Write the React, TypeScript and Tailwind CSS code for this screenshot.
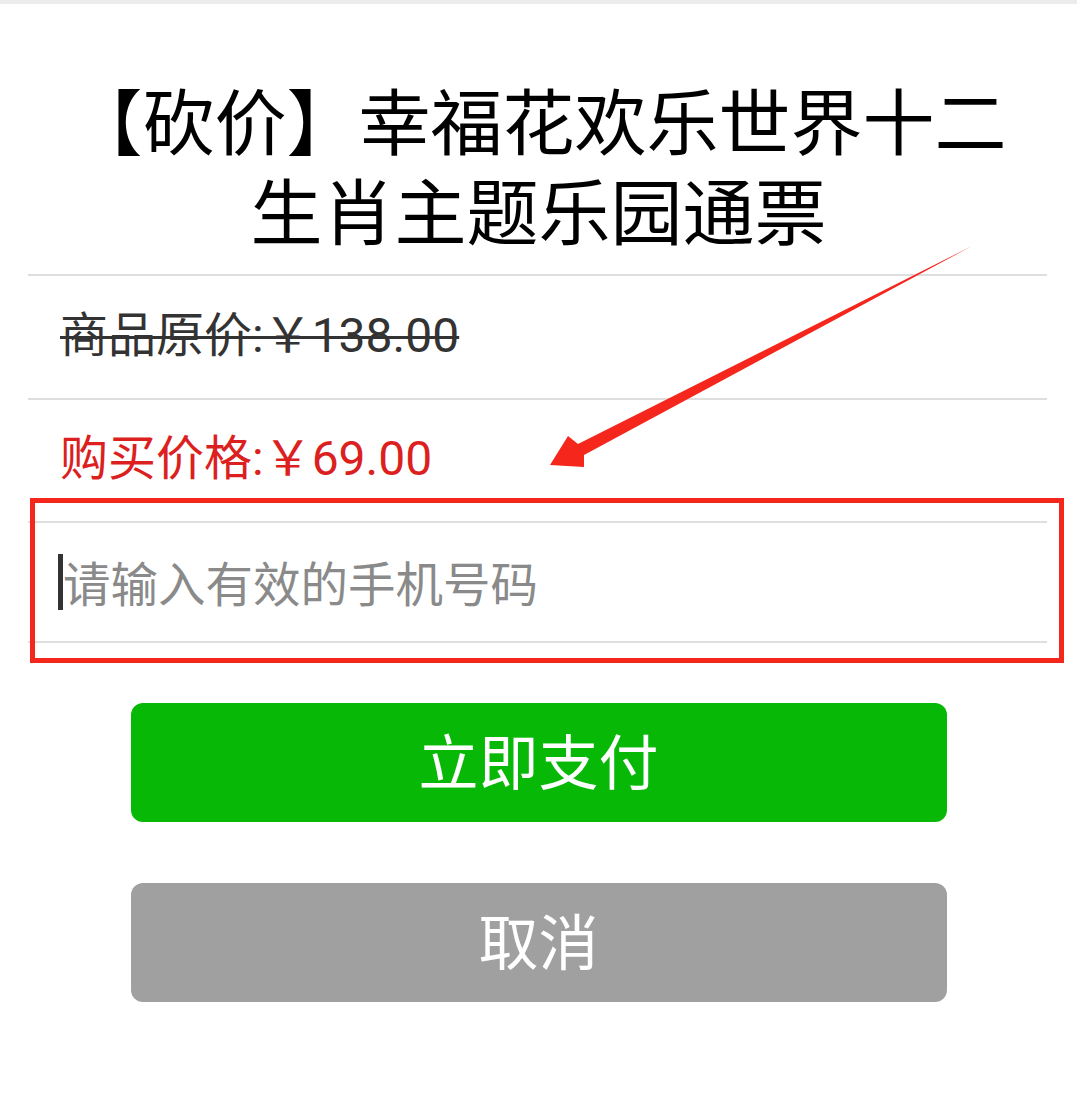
import React from 'react';

const cjk = "font-['Noto_Sans_CJK_SC',sans-serif]";
const mixed = "font-['Roboto','Noto_Sans_CJK_SC',sans-serif]";

const Arrow: React.FC = () => (
  <svg className="pointer-events-none absolute left-0 top-0" width="1077" height="1096" viewBox="0 0 1077 1096">
    <polygon points="550,465 568,436 578,444 972,246 584,455 584,467" fill="#f5261c" />
  </svg>
);

const App: React.FC = () => {
  return (
    <div className={`relative w-[1077px] min-h-[1096px] bg-white ${cjk}`}>
      <div className="h-[4px] bg-[#ececec]" />

      <h1 className="px-[40px] pt-[69px] pb-[21px] text-center text-[72px] leading-[90px] font-normal text-black">
        【砍价】幸福花欢乐世界十二生肖主题乐园通票
      </h1>

      <div className="mx-[28px] mr-[30px]">
        <div className="h-[2px] bg-[#dedede]" />
        <div className="flex h-[122px] items-center pl-[32px] pb-[2px]">
          <span className={`${mixed} text-[48px] text-[#333] line-through decoration-[3px]`}>商品原价:￥138.00</span>
        </div>
        <div className="h-[2px] bg-[#dedede]" />
        <div className="flex h-[121px] items-center pl-[32px] pb-[3px]">
          <span className={`${mixed} text-[48px] text-[#dc1f1f]`}>购买价格:￥69.00</span>
        </div>
        <div className="h-[2px] bg-[#dedede]" />
        <div className="flex h-[118px] items-center pl-[30px]">
          <span className="h-[56px] w-[5px] bg-[#333]" />
          <input
            className={`${cjk} w-full bg-transparent text-[47.5px] outline-none placeholder:text-[#8a8a8a]`}
            placeholder="请输入有效的手机号码"
          />
        </div>
        <div className="h-[2px] bg-[#dedede]" />
      </div>

      <div className="mt-[60px] flex flex-col items-center gap-[61px]">
        <button className="flex h-[119px] w-[816px] items-center justify-center rounded-[12px] bg-[#07b807] pb-[8px] text-[60px] text-white">
          立即支付
        </button>
        <button className="flex h-[119px] w-[816px] items-center justify-center rounded-[12px] bg-[#a0a0a0] pb-[8px] text-[60px] text-white">
          取消
        </button>
      </div>

      {/* annotation overlay */}
      <div className="pointer-events-none absolute left-[30px] top-[498px] h-[165px] w-[1034px] border-[5px] border-[#f5261c]" />
      <Arrow />
    </div>
  );
};

export default App;
